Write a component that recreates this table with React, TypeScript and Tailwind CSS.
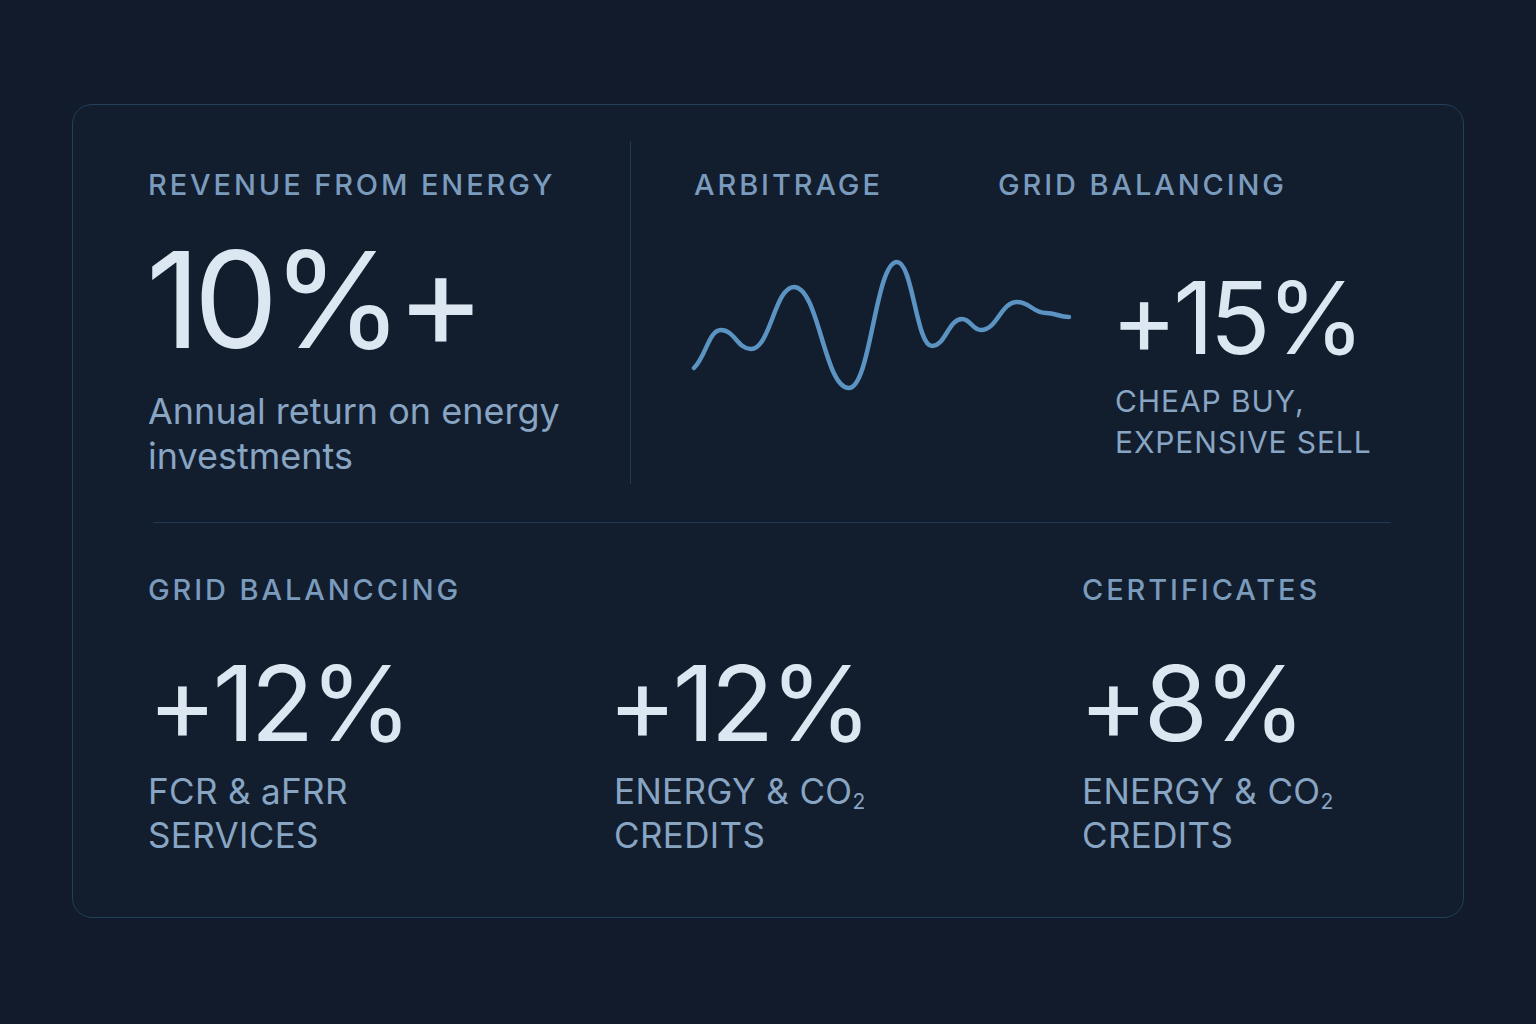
const wavePoints: [number, number][] = [
  [0, 118],
  [27, 80],
  [57, 99],
  [100, 37],
  [155, 138],
  [203, 12],
  [238, 96],
  [268, 69],
  [287, 80],
  [323, 52],
  [352, 63],
  [375, 67],
];

function wavePath(pts: [number, number][]) {
  let d = `M${pts[0][0]} ${pts[0][1]}`;
  for (let i = 1; i < pts.length; i++) {
    const [x0, y0] = pts[i - 1];
    const [x1, y1] = pts[i];
    const k = (x1 - x0) * 0.45;
    const c1y = i === 1 ? y0 - 12 : y0;
    d += ` C${x0 + k} ${c1y} ${x1 - k} ${y1} ${x1} ${y1}`;
  }
  return d;
}

const label = "text-[29px] leading-[30px] font-medium tracking-[0.1em] text-[#7b9bbd] uppercase";
const bigNum = "font-normal tracking-[-0.04em] text-[#dce7f1] leading-none";
const sub = "text-[35px] leading-[44px] tracking-[0.01em] text-[#88a5c3]";

const Co2 = () => (
  <>
    CO<span className="relative top-[5px] text-[21px] leading-none">2</span>
  </>
);

export default function App() {
  return (
    <main
      className="min-h-screen bg-[#111b2b] pt-[104px] px-[72px] pb-[106px]"
      style={{ fontFamily: "Inter, 'Noto Sans', sans-serif" }}
    >
      <section className="rounded-[20px] border border-[#22405a] bg-[#121d2e] pt-[36px] pb-[60px]">
        {/* top row */}
        <div className="flex">
          <div className="ml-[75px] w-[483px] h-[343px] border-r border-[#1f3a52] pt-[29px]">
            <h3 className={label}>Revenue from Energy</h3>
            <div className={`mt-[32px] -ml-[2px] text-[134px] tracking-[-0.05em] ${bigNum}`}>10%+</div>
            <p className="mt-[23px] text-[36px] leading-[45px] text-[#88a5c3]">
              Annual return on energy investments
            </p>
          </div>

          <div className="pl-[63px] pt-[29px]">
            <div className="flex">
              <h3 className={`${label} w-[304px]`}>Arbitrage</h3>
              <h3 className={label}>Grid Balancing</h3>
            </div>
            <div className="mt-[50px] flex items-start gap-[42px]">
              <svg width="375" height="145" viewBox="0 0 375 145" className="overflow-visible">
                <path
                  d={wavePath(wavePoints)}
                  fill="none"
                  stroke="#5b93c2"
                  strokeWidth="4.5"
                  strokeLinecap="round"
                  strokeLinejoin="round"
                />
              </svg>
              <div className="pt-[18px]">
                <div className={`text-[100px] ${bigNum}`}>+15%</div>
                <p className="mt-[13px] ml-[4px] text-[30px] leading-[41px] tracking-[0.03em] text-[#88a5c3] uppercase">
                  Cheap buy,
                  <br />
                  Expensive sell
                </p>
              </div>
            </div>
          </div>
        </div>

        <div className="mt-[38px] ml-[80px] mr-[72px] h-px bg-[#1f3a52]" />

        {/* bottom row */}
        <div className="ml-[75px] pt-[52px] grid grid-cols-[466px_468px_1fr]">
          <div>
            <h3 className={label}>Grid Balanccing</h3>
            <div className={`mt-[46px] text-[104px] ${bigNum}`}>+12%</div>
            <p className={`mt-[14px] ${sub}`}>
              FCR &amp; aFRR
              <br />
              SERVICES
            </p>
          </div>
          <div>
            <div className="h-[30px]" />
            <div className={`mt-[46px] -ml-[6px] text-[104px] ${bigNum}`}>+12%</div>
            <p className={`mt-[14px] ${sub}`}>
              ENERGY &amp; <Co2 />
              <br />
              CREDITS
            </p>
          </div>
          <div>
            <h3 className={label}>Certificates</h3>
            <div className={`mt-[46px] -ml-[3px] text-[104px] ${bigNum}`}>+8%</div>
            <p className={`mt-[14px] ${sub}`}>
              ENERGY &amp; <Co2 />
              <br />
              CREDITS
            </p>
          </div>
        </div>
      </section>
    </main>
  );
}
